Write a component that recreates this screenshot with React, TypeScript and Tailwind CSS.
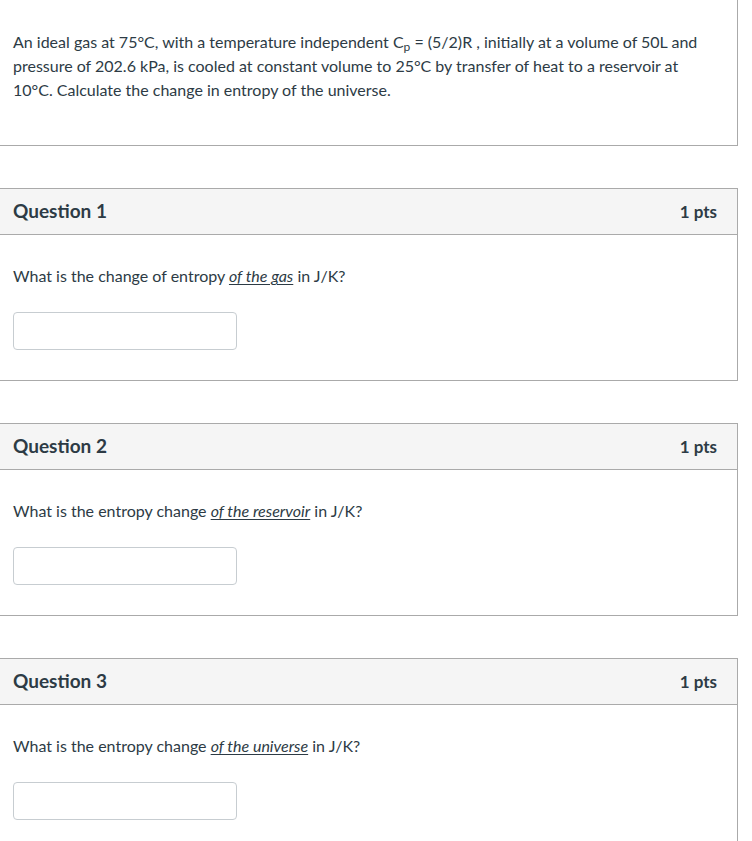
import React from "react";

type Question = {
  title: string;
  points: string;
  before: string;
  emphasis: string;
  after: string;
};

const questions: Question[] = [
  {
    title: "Question 1",
    points: "1 pts",
    before: "What is the change of entropy ",
    emphasis: "of the gas",
    after: " in J/K?",
  },
  {
    title: "Question 2",
    points: "1 pts",
    before: "What is the entropy change ",
    emphasis: "of the reservoir",
    after: " in J/K?",
  },
  {
    title: "Question 3",
    points: "1 pts",
    before: "What is the entropy change ",
    emphasis: "of the universe",
    after: " in J/K?",
  },
];

function QuestionCard({ q }: { q: Question }) {
  return (
    <section className="-ml-px w-[739px] border border-[#aaaaaa] bg-white">
      <header className="flex h-[46px] items-center justify-between border-b border-[#aaaaaa] bg-[#f5f5f5] pl-[13px] pr-[20px]">
        <h2 className="text-[19px] font-bold text-[#2d3b45]">{q.title}</h2>
        <span className="text-[17px] font-bold text-[#2d3b45]">{q.points}</span>
      </header>
      <div className="pl-[13px] pb-[30px] pt-[29px]">
        <p className="text-[16px] leading-6 text-[#2d3b45]">
          {q.before}
          <em className="underline underline-offset-2">{q.emphasis}</em>
          {q.after}
        </p>
        <input
          type="text"
          aria-label={q.title + " answer"}
          className="mt-6 block h-[38px] w-[224px] rounded border border-[#c7cdd1] bg-white px-2 text-[16px] outline-none"
        />
      </div>
    </section>
  );
}

export default function App() {
  return (
    <div
      className="min-h-screen bg-white"
      style={{ fontFamily: "Lato, 'Liberation Sans', sans-serif" }}
    >
      <section className="-ml-px -mt-px w-[739px] border border-[#aaaaaa] pb-[43px] pl-[13px] pt-[30px]">
        <p className="pr-6 text-[16px] leading-6 text-[#2d3b45]">
          An ideal gas at 75°C, with a temperature independent C
          <sub className="leading-none">p</sub> = (5/2)R , initially at a volume of 50L and
          pressure of 202.6 kPa, is cooled at constant volume to 25°C by transfer of heat
          to a reservoir at 10°C. Calculate the change in entropy of the universe.
        </p>
      </section>
      <div className="mt-[42px] flex flex-col gap-[42px]">
        {questions.map((q) => (
          <QuestionCard key={q.title} q={q} />
        ))}
      </div>
    </div>
  );
}
